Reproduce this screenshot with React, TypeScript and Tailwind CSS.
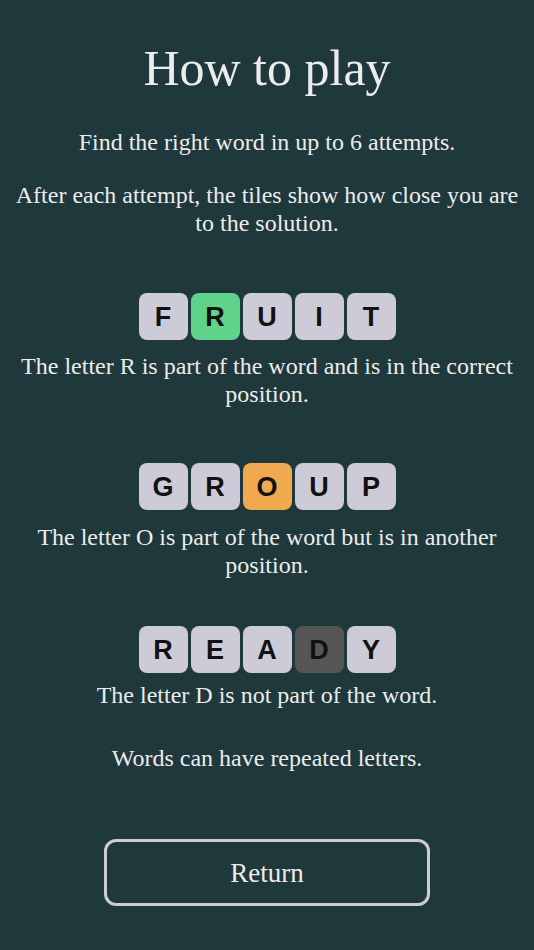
const TILE_BG: Record<string, string> = {
  none: 'bg-[#cdcbd8]',
  correct: 'bg-[#5fd38a]',
  present: 'bg-[#f0a94e]',
  absent: 'bg-[#565656]',
};

type Tile = { letter: string; state: keyof typeof TILE_BG };

function tiles(word: string, idx: number, state: Tile['state']): Tile[] {
  return word.split('').map((letter, i) => ({ letter, state: i === idx ? state : 'none' }));
}

const EXAMPLES = [
  {
    tiles: tiles('FRUIT', 1, 'correct'),
    text: 'The letter R is part of the word and is in the correct position.',
    rowMt: 'mt-[56px]',
    textMt: 'mt-[12px]',
  },
  {
    tiles: tiles('GROUP', 2, 'present'),
    text: 'The letter O is part of the word but is in another position.',
    rowMt: 'mt-[55px]',
    textMt: 'mt-[13px]',
  },
  {
    tiles: tiles('READY', 3, 'absent'),
    text: 'The letter D is not part of the word.',
    rowMt: 'mt-[47px]',
    textMt: 'mt-[8px]',
  },
];

function WordRow({ tiles }: { tiles: Tile[] }) {
  return (
    <div className="flex justify-center gap-[3px]">
      {tiles.map((t, i) => (
        <div
          key={i}
          className={`w-[49px] h-[47px] rounded-[8px] flex items-center justify-center text-[27px] font-bold text-[#111] font-['Liberation_Sans',Arial,sans-serif] ${TILE_BG[t.state]}`}
        >
          {t.letter}
        </div>
      ))}
    </div>
  );
}

export default function App() {
  return (
    <div className="min-h-[950px] w-full bg-[#1f383b] text-[#ececec] font-['Liberation_Serif','Times_New_Roman',serif] text-center px-[14px] text-[24px] leading-[28px]">
      <h1 className="pt-[40px] text-[50px] leading-[56px]">How to play</h1>

      <p className="mt-[32px]">Find the right word in up to 6 attempts.</p>
      <p className="mt-[25px]">After each attempt, the tiles show how close you are to the solution.</p>

      {EXAMPLES.map((ex, i) => (
        <div key={i} className={ex.rowMt}>
          <WordRow tiles={ex.tiles} />
          <p className={ex.textMt}>{ex.text}</p>
        </div>
      ))}

      <p className="mt-[35px]">Words can have repeated letters.</p>

      <div className="mt-[67px] flex justify-center">
        <button className="w-[326px] h-[67px] rounded-[12px] border-[3px] border-[#cdcbd8] text-[27px] text-[#ececec]">
          Return
        </button>
      </div>
    </div>
  );
}
